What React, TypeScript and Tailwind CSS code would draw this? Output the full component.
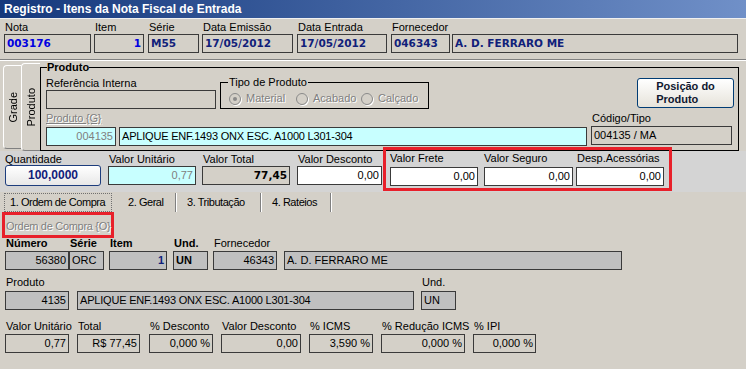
import React from 'react';

const NARROW = 'text-[11px] tracking-[-0.45px]';
const VAL = "font-['DejaVu_Sans',sans-serif] font-bold text-[10.5px]";
const GREY = 'text-[#808080] [text-shadow:1px_1px_0_#ffffff]';

function Box({ className = '', children }: { className?: string; children?: React.ReactNode }) {
  return (
    <div className={`h-[19px] border border-[#3a3a3a] leading-[17px] px-[2px] whitespace-nowrap overflow-hidden ${className}`}>
      {children}
    </div>
  );
}

function HeadCol({ label, w, ml, children }: { label?: string; w: string; ml: string; children: React.ReactNode }) {
  return (
    <div className={`flex flex-col ${w} ${ml}`}>
      <div className="h-[14px] leading-[14px] pl-[1px] whitespace-nowrap">{label}</div>
      {children}
    </div>
  );
}

function Radio({ label, checked, w }: { label: string; checked?: boolean; w: string }) {
  return (
    <div className={`flex items-center ${w}`}>
      <span className="w-[12px] h-[12px] rounded-full border border-[#8a8a8a] shadow-[1px_1px_0_#ffffff] flex items-center justify-center">
        {checked && <span className="w-[4px] h-[4px] rounded-full bg-[#8a8a8a]" />}
      </span>
      <span className={`ml-[5px] ${GREY}`}>{label}</span>
    </div>
  );
}

function ValCol({ label, w, ml, children }: { label: string; w: string; ml: string; children: React.ReactNode }) {
  return (
    <div className={`flex flex-col ${w} ${ml}`}>
      <div className="h-[13px] leading-[13px] pl-[1px] whitespace-nowrap">{label}</div>
      {children}
    </div>
  );
}

function LowCol({ label, w, ml, bold, children }: { label?: string; w: string; ml: string; bold?: boolean; children: React.ReactNode }) {
  return (
    <div className={`flex flex-col ${w} ${ml}`}>
      <div className={`h-[16px] leading-[16px] pl-[1px] whitespace-nowrap ${bold ? 'font-bold' : ''}`}>{label}</div>
      {children}
    </div>
  );
}

export default function App() {
  return (
    <div className="w-[748px] h-[369px] bg-white flex overflow-hidden font-['Liberation_Sans',Arial,sans-serif] text-[11px] text-black">
      <div className="w-[746px] h-full bg-[#d4d0c8] flex flex-col">
        {/* title */}
        <div className="h-[19px] border-b border-[#f0f0f0] bg-linear-to-r from-[#15387c] to-[#7090c8] pl-[4px] leading-[18px] text-[12px] font-bold text-white">
          Registro - Itens da Nota Fiscal de Entrada
        </div>

        {/* header */}
        <div className="flex pl-[4px] pt-[1px] pb-[6px] border-b border-[#808080]">
          <HeadCol label="Nota" w="w-[87px]" ml="ml-0">
            <Box className={`${VAL} text-[#0000e0]`}>003176</Box>
          </HeadCol>
          <HeadCol label="Item" w="w-[50px]" ml="ml-[3px]">
            <Box className={`${VAL} text-[#0000e0] text-right`}>1</Box>
          </HeadCol>
          <HeadCol label="Série" w="w-[51px]" ml="ml-[4px]">
            <Box className={`${VAL} text-[#10207a]`}>M55</Box>
          </HeadCol>
          <HeadCol label="Data Emissão" w="w-[91px]" ml="ml-[3px]">
            <Box className={`${VAL} text-[#10207a]`}>17/05/2012</Box>
          </HeadCol>
          <HeadCol label="Data Entrada" w="w-[90px]" ml="ml-[4px]">
            <Box className={`${VAL} text-[#10207a]`}>17/05/2012</Box>
          </HeadCol>
          <HeadCol label="Fornecedor" w="w-[59px]" ml="ml-[4px]">
            <Box className={`${VAL} text-[#10207a]`}>046343</Box>
          </HeadCol>
          <HeadCol w="w-[286px]" ml="ml-[2px]">
            <Box className={`${VAL} text-[#10207a]`}>A. D. FERRARO ME</Box>
          </HeadCol>
        </div>
        <div className="h-[1px] bg-white" />

        {/* produto */}
        <div className="flex h-[90px]">
          <div className="ml-[3px] mt-[4px] w-[18px] h-[84px] rounded-l-[4px] border-l border-t border-b border-l-white border-t-white border-b-[#808080] flex items-center justify-center">
            <span className="[writing-mode:vertical-rl] rotate-180 leading-[14px]">Grade</span>
          </div>
          <div className="mt-[2px] w-[19px] h-[88px] rounded-l-[4px] border-l border-t border-b border-l-white border-t-white border-b-[#808080] flex items-center justify-center">
            <span className="[writing-mode:vertical-rl] rotate-180 leading-[14px]">Produto</span>
          </div>
          <fieldset className="w-[699px] h-[90px] border border-black">
            <legend className="ml-[6px] px-0 font-bold leading-[13px]">Produto</legend>
            <div className="pl-[5px] pr-[4px]">
              <div className="flex items-end pt-[2px]">
                <div className="flex flex-col w-[170px]">
                  <div className="h-[13px] leading-[13px]">Referência Interna</div>
                  <Box className="bg-[#d4d0c8]" />
                </div>
                <fieldset className="ml-[4px] w-[209px] h-[33px] border border-black">
                  <legend className="ml-[7px] px-[1px] leading-[13px]">Tipo de Produto</legend>
                  <div className="flex items-center h-[19px] pl-[8px]">
                    <Radio label="Material" checked w="w-[67px]" />
                    <Radio label="Acabado" w="w-[65px]" />
                    <Radio label="Calçado" w="w-[60px]" />
                  </div>
                </fieldset>
                <button className="ml-auto mb-[1px] w-[97px] h-[30px] rounded-[3px] border border-[#003c74] bg-linear-to-b from-white to-[#e6e3da] flex items-center justify-center font-bold text-[#101830] leading-[13px]">
                  <span className="text-left">Posição do<br />Produto</span>
                </button>
              </div>
              <div className="flex pt-[2px]">
                <div className="flex flex-col">
                  <div className={`h-[14px] leading-[14px] tracking-[-0.2px] underline ${GREY}`}>Produto {'{G}'}</div>
                  <div className="flex mt-[2px]">
                    <Box className="w-[70px] bg-[#c8ffff] text-right text-[#808080]">004135</Box>
                    <Box className="ml-[3px] w-[468px] bg-[#c8ffff] tracking-[-0.2px]">APLIQUE ENF.1493 ONX ESC. A1000 L301-304</Box>
                  </div>
                </div>
                <div className="flex flex-col ml-[4px]">
                  <div className="h-[14px] leading-[14px] pl-[1px]">Código/Tipo</div>
                  <Box className="mt-[1px] w-[141px]">004135 / MA</Box>
                </div>
              </div>
            </div>
          </fieldset>
        </div>

        {/* valores */}
        <div className="flex h-[41px] bg-[#d4d4d4] pl-[5px] pt-[2px]">
          <div className="flex flex-col w-[96px]">
            <div className="h-[12px] leading-[12px] whitespace-nowrap">Quantidade</div>
            <div className="h-[21px] rounded-[3px] border border-[#1d3d7d] bg-linear-to-b from-white to-[#e8e8e8] text-center leading-[19px] text-[12px] font-bold text-[#10207a]">
              100,0000
            </div>
          </div>
          <ValCol label="Valor Unitário" w="w-[88px]" ml="ml-[7px]">
            <Box className="bg-[#c8ffff] text-right text-[#808080]">0,77</Box>
          </ValCol>
          <ValCol label="Valor Total" w="w-[88px]" ml="ml-[6px]">
            <Box className={`bg-[#d4d0c8] text-right ${VAL}`}>77,45</Box>
          </ValCol>
          <ValCol label="Valor Desconto" w="w-[85px]" ml="ml-[7px]">
            <Box className="bg-white text-right">0,00</Box>
          </ValCol>
          <div className="relative z-10 ml-[1px] mt-[-6px] w-[289px] h-[44px] border-[3px] border-[#e8202a] flex pl-[4px] pt-[2px]">
            <div className="flex flex-col w-[88px]">
              <div className="h-[13px] leading-[13px] whitespace-nowrap">Valor Frete</div>
              <Box className="mt-[2px] bg-white text-right">0,00</Box>
            </div>
            <div className="flex flex-col w-[89px] ml-[6px]">
              <div className="h-[13px] leading-[13px] whitespace-nowrap">Valor Seguro</div>
              <Box className="mt-[2px] bg-white text-right">0,00</Box>
            </div>
            <div className="flex flex-col w-[88px] ml-[3px]">
              <div className="h-[13px] leading-[13px] pl-[1px] whitespace-nowrap">Desp.Acessórias</div>
              <Box className="mt-[2px] bg-white text-right">0,00</Box>
            </div>
          </div>
        </div>

        {/* tabs */}
        <div className={`flex h-[20px] ${NARROW}`}>
          <div className="ml-[4px] mt-[1px] w-[108px] h-[19px] border border-dotted border-[#707070] pl-[5px] leading-[17px] whitespace-nowrap">
            1. Ordem de Compra
          </div>
          <div className="mt-[1px] w-[64px] h-[19px] pl-[16px] leading-[19px] border-r border-[#808080] shadow-[1px_0_0_#ffffff] whitespace-nowrap">2. Geral</div>
          <div className="mt-[1px] w-[85px] h-[19px] pl-[11px] leading-[19px] border-r border-[#808080] shadow-[1px_0_0_#ffffff] whitespace-nowrap">3. Tributação</div>
          <div className="mt-[1px] w-[70px] h-[19px] pl-[11px] leading-[19px] border-r border-[#808080] shadow-[1px_0_0_#ffffff] whitespace-nowrap">4. Rateios</div>
        </div>

        {/* tab page */}
        <div className="flex flex-col">
          <div className="relative z-10 ml-[2px] w-[112px] h-[26px] border-[3px] border-[#e8202a]">
            <div className={`pl-[1px] leading-[22px] tracking-[-0.3px] whitespace-nowrap ${GREY}`}>Ordem de Compra {'{O}'}</div>
          </div>

          <div className="flex pl-[5px] mt-[-3px]">
            <LowCol label="Número" bold w="w-[64px]" ml="ml-0">
              <Box className="bg-[#c0c0c0] text-right">56380</Box>
            </LowCol>
            <LowCol label="Série" bold w="w-[35px]" ml="ml-0">
              <Box className="bg-[#c0c0c0]">ORC</Box>
            </LowCol>
            <LowCol label="Item" bold w="w-[58px]" ml="ml-[5px]">
              <Box className="bg-[#c0c0c0] text-right font-bold text-[#10207a]">1</Box>
            </LowCol>
            <LowCol label="Und." bold w="w-[35px]" ml="ml-[6px]">
              <Box className="bg-[#c0c0c0] font-bold">UN</Box>
            </LowCol>
            <LowCol label="Fornecedor" w="w-[64px]" ml="ml-[5px]">
              <Box className="bg-[#c0c0c0] text-right">46343</Box>
            </LowCol>
            <LowCol w="w-[338px]" ml="ml-[7px]">
              <Box className="bg-[#c0c0c0]">A. D. FERRARO ME</Box>
            </LowCol>
          </div>

          <div className="flex pl-[5px] mt-[4px]">
            <LowCol label="Produto" w="w-[64px]" ml="ml-0">
              <Box className="mt-[1px] h-[18px] leading-[16px] bg-[#c0c0c0] text-right">4135</Box>
            </LowCol>
            <LowCol w="w-[337px]" ml="ml-[8px]">
              <Box className="mt-[1px] h-[18px] leading-[16px] bg-[#c0c0c0] tracking-[-0.2px]">APLIQUE ENF.1493 ONX ESC. A1000 L301-304</Box>
            </LowCol>
            <LowCol label="Und." w="w-[35px]" ml="ml-[7px]">
              <Box className="mt-[1px] h-[18px] leading-[16px] bg-[#c0c0c0]">UN</Box>
            </LowCol>
          </div>

          <div className="flex pl-[5px] mt-[8px]">
            <LowCol label="Valor Unitário" w="w-[64px]" ml="ml-0">
              <Box className="text-right">0,77</Box>
            </LowCol>
            <LowCol label="Total" w="w-[63px]" ml="ml-[8px]">
              <Box className="text-right">R$ 77,45</Box>
            </LowCol>
            <LowCol label="% Desconto" w="w-[64px]" ml="ml-[9px]">
              <Box className="text-right">0,000 %</Box>
            </LowCol>
            <LowCol label="Valor Desconto" w="w-[80px]" ml="ml-[8px]">
              <Box className="text-right">0,00</Box>
            </LowCol>
            <LowCol label="% ICMS" w="w-[64px]" ml="ml-[8px]">
              <Box className="text-right">3,590 %</Box>
            </LowCol>
            <LowCol label="% Redução ICMS" w="w-[84px]" ml="ml-[8px]">
              <Box className="text-right">0,000 %</Box>
            </LowCol>
            <LowCol label="% IPI" w="w-[63px]" ml="ml-[8px]">
              <Box className="text-right">0,000 %</Box>
            </LowCol>
          </div>
        </div>
      </div>
      <div className="w-[2px] h-full bg-white" />
    </div>
  );
}
